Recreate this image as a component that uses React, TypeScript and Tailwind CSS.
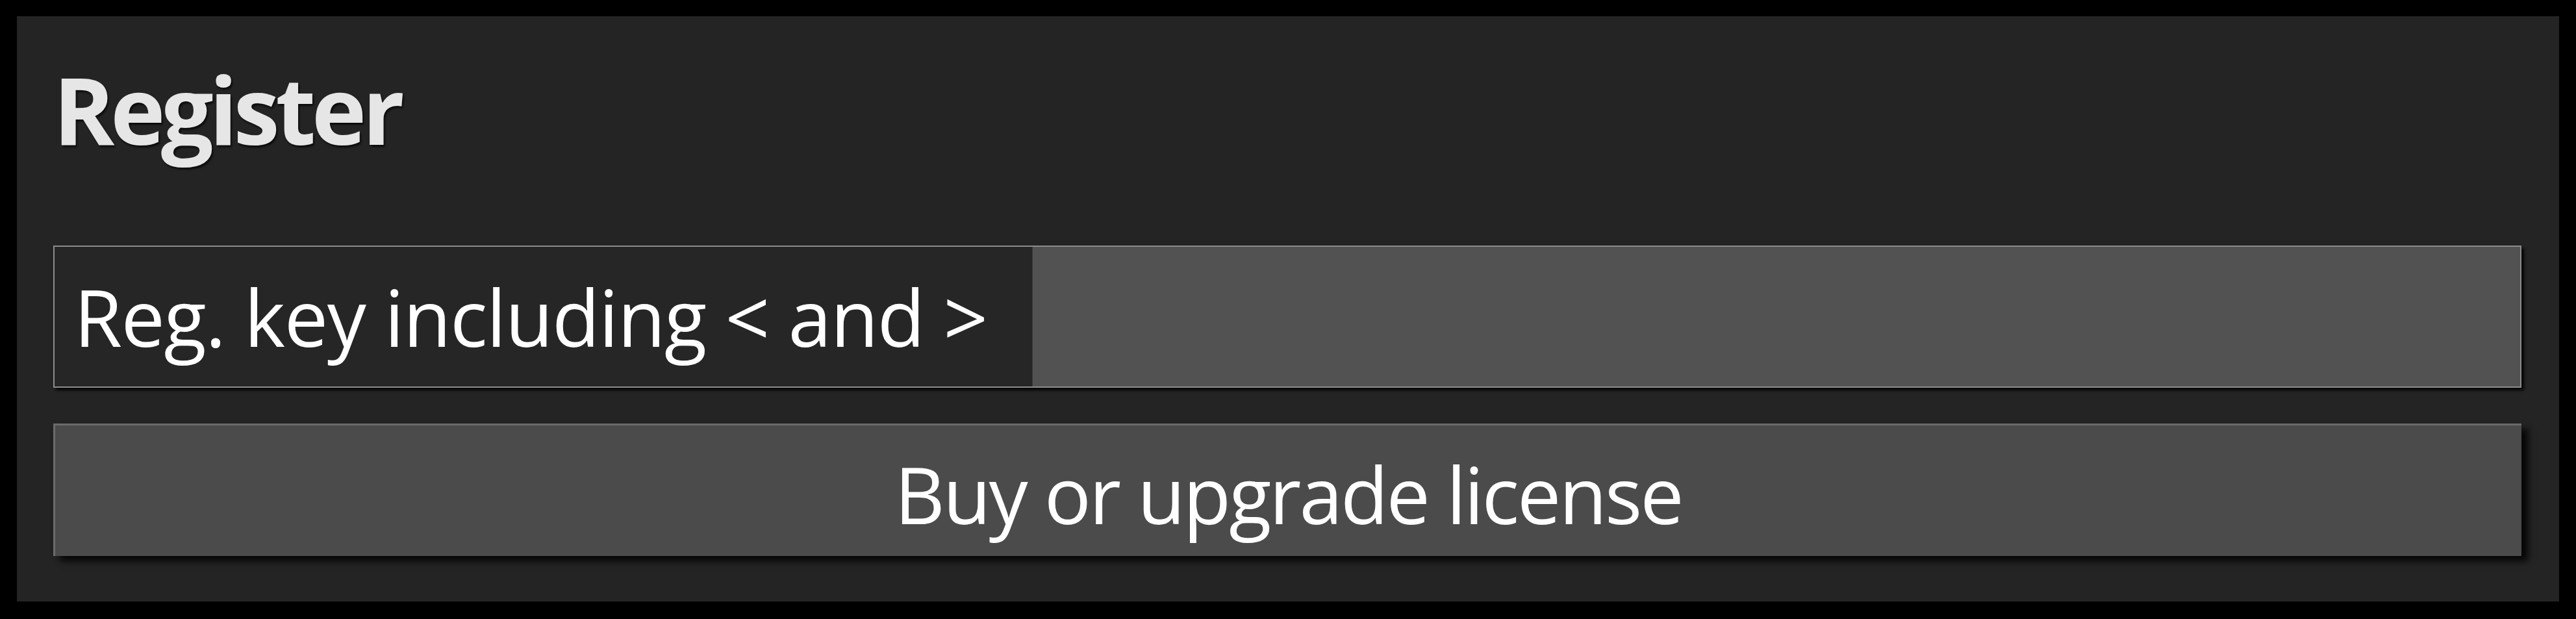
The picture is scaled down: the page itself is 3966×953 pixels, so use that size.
export default function App() {
  return (
    <div className="w-full h-[953px] bg-black pl-[26px] pr-[26px] pt-[25px] pb-[27px] font-['Open_Sans','Noto_Sans',sans-serif]">
      <div className="h-full bg-[#242424] pt-[69px] pl-[56px] pr-[58px] flex flex-col">
        {/* Title */}
        <h1 className="text-[143px] leading-[148px] font-bold text-[#e6e6e6] tracking-[-0.045em] [text-shadow:2px_3px_3px_rgba(0,0,0,0.7)]">
          Register
        </h1>

        {/* Registration key row */}
        <div className="mt-[136px] h-[219px] flex border-2 border-[#8c8c8c] shadow-[4px_4px_4px_rgba(0,0,0,0.85)]">
          <div className="w-[1505px] shrink-0 bg-[#262626] flex items-center pl-[30px]">
            <span className="text-[120px] leading-none text-white tracking-[-0.012em] whitespace-nowrap">
              Reg. key including &lt; and &gt;
            </span>
          </div>
          <input
            type="text"
            className="flex-1 h-full bg-[#525252] border-l border-[#3a3a3a] outline-none text-white text-[120px] px-6"
          />
        </div>

        {/* Buy button */}
        <button className="mt-[55px] h-[204px] w-full bg-[#4b4b4b] border-t-[3px] border-l-[3px] border-[#6b6b6b] shadow-[10px_8px_10px_rgba(0,0,0,0.85)] flex items-center justify-center">
          <span className="text-[120px] leading-none text-white tracking-[-0.025em] pt-[10px]">
            Buy or upgrade license
          </span>
        </button>
      </div>
    </div>
  );
}
